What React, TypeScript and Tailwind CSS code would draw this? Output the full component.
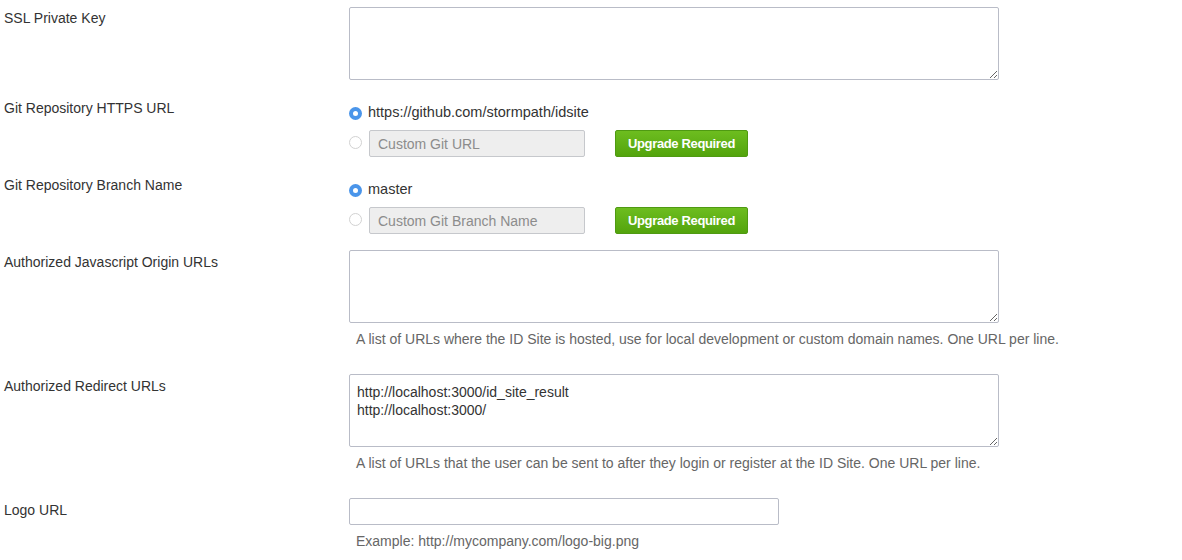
import { FunctionComponent } from "react";

const Radio: FunctionComponent<{ checked?: boolean }> = ({ checked }) =>
  checked ? (
    <span className="w-[13px] h-[13px] rounded-full bg-[#4a95ea] flex items-center justify-center shrink-0">
      <span className="w-[5px] h-[5px] rounded-full bg-white" />
    </span>
  ) : (
    <span className="w-[13px] h-[13px] rounded-full border border-[#d2d2d2] bg-white shrink-0" />
  );

const UpgradeButton: FunctionComponent = () => (
  <button className="ml-[30px] w-[133px] h-[27px] rounded-[2px] border border-[#4f9a12] bg-gradient-to-b from-[#6dbd1f] to-[#53a40c] text-white text-[13px] font-bold tracking-[-0.35px]">
    Upgrade Required
  </button>
);

const ChoiceField: FunctionComponent<{ value: string; placeholder: string }> = ({ value, placeholder }) => (
  <div className="flex flex-col pt-[5px]">
    <div className="h-[20px] flex items-center">
      <Radio checked />
      <span className="ml-[6px] text-[14.5px] text-[#333]">{value}</span>
    </div>
    <div className="mt-[7px] flex items-center">
      <span className="-mt-[3px] flex"><Radio /></span>
      <input
        disabled
        placeholder={placeholder}
        className="ml-[7px] w-[216px] h-[27px] px-[8px] rounded-[2px] border border-[#c6c8cc] bg-[#eeeeee] text-[14px] placeholder:text-[#8c8c8c] outline-none"
      />
      <UpgradeButton />
    </div>
  </div>
);

const App: FunctionComponent = () => {
  return (
    <div className="w-[1182px] h-[560px] bg-white overflow-hidden pt-[7px] font-['Liberation_Sans',Helvetica,Arial,sans-serif] text-[#333]">
      <div className="flex flex-row">
        <div className="w-[349px] pl-[4px] pt-[1px] text-[14px] leading-[20px]">SSL Private Key</div>
        <textarea className="w-[650px] h-[73px] rounded-[2px] border border-[#b9bcc7] bg-white outline-none" />
      </div>

      <div className="flex flex-row mt-[18px]">
        <div className="w-[349px] pl-[4px] text-[14px] leading-[20px]">Git Repository HTTPS URL</div>
        <ChoiceField value="https://github.com/stormpath/idsite" placeholder="Custom Git URL" />
      </div>

      <div className="flex flex-row mt-[18px]">
        <div className="w-[349px] pl-[4px] text-[14px] leading-[20px]">Git Repository Branch Name</div>
        <ChoiceField value="master" placeholder="Custom Git Branch Name" />
      </div>

      <div className="flex flex-row mt-[16px]">
        <div className="w-[349px] pl-[4px] pt-[2px] text-[14px] leading-[20px]">Authorized Javascript Origin URLs</div>
        <div className="flex flex-col">
          <textarea className="w-[650px] h-[73px] rounded-[2px] border border-[#b9bcc7] bg-white outline-none" />
          <p className="mt-[6px] pl-[7px] text-[14px] leading-[20px] text-[#666] whitespace-nowrap">
            A list of URLs where the ID Site is hosted, use for local development or custom domain names. One URL per line.
          </p>
        </div>
      </div>

      <div className="flex flex-row mt-[25px]">
        <div className="w-[349px] pl-[4px] pt-[2px] text-[14px] leading-[20px]">Authorized Redirect URLs</div>
        <div className="flex flex-col">
          <textarea
            className="w-[650px] h-[73px] rounded-[2px] border border-[#b9bcc7] bg-white outline-none pt-[8px] px-[7px] text-[14px] leading-[18px] text-[#333]"
            defaultValue={"http://localhost:3000/id_site_result\nhttp://localhost:3000/"}
          />
          <p className="mt-[6px] pl-[7px] text-[14px] leading-[20px] text-[#666] whitespace-nowrap">
            A list of URLs that the user can be sent to after they login or register at the ID Site. One URL per line.
          </p>
        </div>
      </div>

      <div className="flex flex-row mt-[25px]">
        <div className="w-[349px] pl-[4px] pt-[2px] text-[14px] leading-[20px]">Logo URL</div>
        <div className="flex flex-col">
          <input className="w-[430px] h-[27px] rounded-[2px] border border-[#b9bcc7] bg-white outline-none" />
          <p className="mt-[6px] pl-[7px] text-[14px] leading-[20px] text-[#666] whitespace-nowrap">
            Example: http://mycompany.com/logo-big.png
          </p>
        </div>
      </div>
    </div>
  );
};

export default App;
